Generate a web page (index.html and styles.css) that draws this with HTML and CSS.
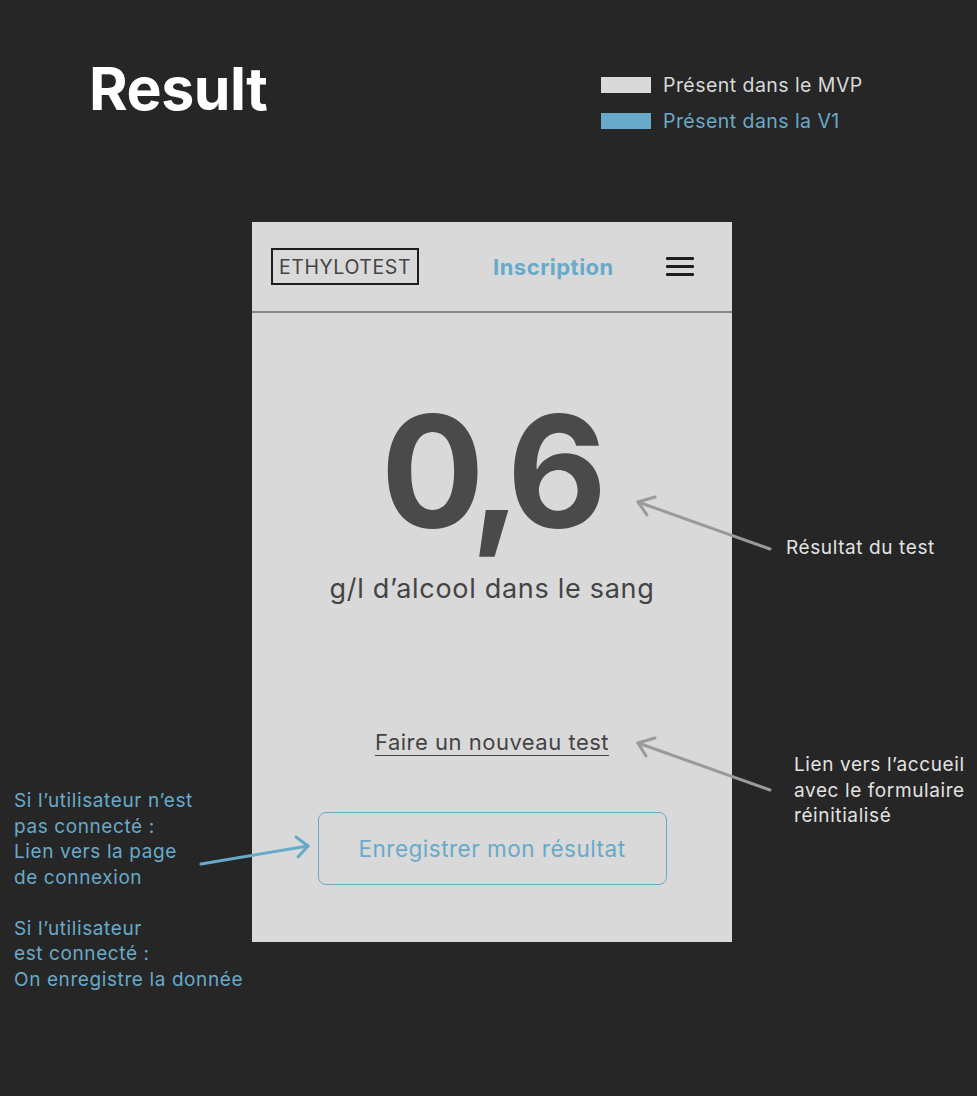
FILE: index.html
```html
<!DOCTYPE html>
<html lang="fr">
<head>
<meta charset="utf-8">
<title>Result</title>
<link rel="stylesheet" href="styles.css">
</head>
<body>
<div class="board">
  <header class="board-head">
    <h1 class="title">Result</h1>
    <ul class="legend">
      <li class="legend-item"><span class="swatch swatch-mvp"></span><span class="legend-mvp">Présent dans le MVP</span></li>
      <li class="legend-item"><span class="swatch swatch-v1"></span><span class="legend-v1">Présent dans la V1</span></li>
    </ul>
  </header>

  <section class="phone">
    <nav class="phone-nav">
      <div class="logo">ETHYLOTEST</div>
      <a class="signup">Inscription</a>
      <div class="burger"><span></span><span></span><span></span></div>
    </nav>
    <div class="phone-body">
      <div class="result">0,6</div>
      <div class="unit">g/l d’alcool dans le sang</div>
      <a class="retest">Faire un nouveau test</a>
      <button class="save">Enregistrer mon résultat</button>
    </div>
  </section>

  <p class="note note-result">Résultat du test</p>
  <p class="note note-link">Lien vers l’accueil<br>avec le formulaire<br>réinitialisé</p>
  <p class="note note-save">Si l’utilisateur n’est<br>pas connecté :<br>Lien vers la page<br>de connexion<br><br>Si l’utilisateur<br>est connecté :<br>On enregistre la donnée</p>

  <svg class="arrows" width="977" height="1096" viewBox="0 0 977 1096">
    <g fill="none" stroke="#9a9a9a" stroke-width="3" stroke-linecap="round" stroke-linejoin="round">
      <path d="M770 549 L638 502"/>
      <path d="M655 497 L638 502 L647 515"/>
      <path d="M770 790 L638 743"/>
      <path d="M655 738 L638 743 L646 756"/>
    </g>
    <g fill="none" stroke="#68aac9" stroke-width="3" stroke-linecap="round" stroke-linejoin="round">
      <path d="M201 864 L308 846"/>
      <path d="M296 837 L308 846 L298 857"/>
    </g>
  </svg>
</div>
</body>
</html>
```

FILE: styles.css
```css
* { box-sizing: border-box; }
html, body { margin: 0; padding: 0; }
body {
  background: #262626;
  font-family: Inter, "Noto Sans", "Liberation Sans", sans-serif;
}
.board {
  position: relative;
  width: 977px;
  height: 1096px;
  overflow: hidden;
}
.board-head {
  display: flex;
  justify-content: space-between;
  align-items: flex-start;
  padding: 53px 0 0 89px;
  height: 222px;
}
.title {
  margin: 0;
  color: #ffffff;
  font-size: 59px;
  font-weight: 700;
  letter-spacing: -0.5px;
  line-height: 72px;
}
.legend {
  list-style: none;
  margin: 0;
  padding: 19px 0 0 0;
  width: 376px;
  display: flex;
  flex-direction: column;
  gap: 11px;
}
.legend-item {
  display: flex;
  align-items: center;
  gap: 12px;
  height: 25px;
  font-size: 19.5px;
  letter-spacing: 0.45px;
}
.swatch { width: 50px; height: 16px; display: block; }
.swatch-mvp { background: #d9d9d9; }
.swatch-v1 { background: #68aac9; }
.legend-mvp { color: #d9d9d9; }
.legend-v1 { color: #68aac9; }

.phone {
  margin-left: 252px;
  width: 480px;
  height: 720px;
  background: #d9d9d9;
  display: flex;
  flex-direction: column;
}
.phone-nav {
  height: 91px;
  border-bottom: 2px solid #8a8a8a;
  display: flex;
  align-items: center;
  padding: 0 38px 0 19px;
}
.logo {
  border: 2px solid #1e1e1e;
  height: 37px;
  width: 148px;
  display: flex;
  align-items: center;
  justify-content: center;
  font-size: 19.5px;
  color: #444;
  letter-spacing: 0.6px;
}
.signup {
  margin-left: 74px;
  color: #68aac9;
  font-weight: 700;
  font-size: 22px;
  letter-spacing: 0.5px;
}
.burger {
  margin-left: auto;
  width: 28px;
  display: flex;
  flex-direction: column;
  gap: 5px;
}
.burger span { display: block; height: 3px; background: #1e1e1e; border-radius: 1px; }

.phone-body {
  display: flex;
  flex-direction: column;
  align-items: center;
  padding-top: 78px;
}
.result {
  font-size: 154px;
  font-weight: 700;
  color: #4a4a4a;
  line-height: 160px;
  letter-spacing: -10px;
  padding-right: 6px;
}
.unit {
  margin-top: 22px;
  font-size: 27px;
  color: #444;
  line-height: 32px;
  letter-spacing: 0.7px;
}
.retest {
  margin-top: 123px;
  font-size: 22px;
  color: #444;
  text-decoration: underline;
  text-decoration-thickness: 1px;
  text-underline-offset: 5px;
  line-height: 28px;
  letter-spacing: 0.5px;
}
.save {
  margin-top: 56px;
  width: 349px;
  height: 73px;
  border: 1.5px solid #68aac9;
  border-radius: 8px;
  background: transparent;
  color: #68aac9;
  font-family: inherit;
  font-size: 22.5px;
  letter-spacing: 0.5px;
}

.note {
  position: absolute;
  margin: 0;
  font-size: 19px;
  line-height: 25.5px;
  letter-spacing: 0.6px;
}
.note-result { left: 786px; top: 535px; color: #e2e2e2; }
.note-link { left: 794px; top: 752px; color: #e2e2e2; }
.note-save { left: 14px; top: 788px; color: #68aac9; }
.arrows { position: absolute; left: 0; top: 0; pointer-events: none; }
```
